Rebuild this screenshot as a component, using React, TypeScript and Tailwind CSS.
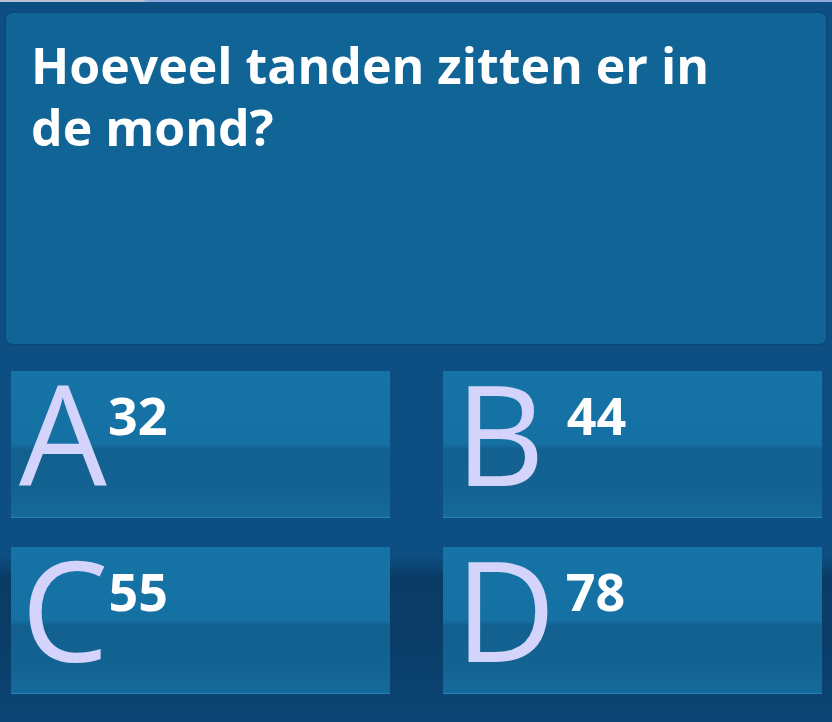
const options = [
  { letter: 'A', value: '32', letterPad: 'pl-[8px]', numPad: 'ml-[1px]' },
  { letter: 'B', value: '44', letterPad: 'pl-[12px]', numPad: 'ml-[22px]' },
  { letter: 'C', value: '55', letterPad: 'pl-[10px]', numPad: 'ml-[0px]' },
  { letter: 'D', value: '78', letterPad: 'pl-[12px]', numPad: 'ml-[10px]' },
];

function AnswerBox({ letter, value, letterPad, numPad }: (typeof options)[number]) {
  return (
    <div className="h-[147px] bg-[linear-gradient(to_bottom,#1673a5_0%,#1571a3_50%,#12608f_54%,#136493_85%,#156a9c_100%)] border-b border-[#2384b8]">
      <div className={`flex items-start ${letterPad}`}>
        <span className="text-[139px] leading-none font-normal text-[#d3d3fc] -mt-[8px]">{letter}</span>
        <span className={`text-[52px] leading-none font-bold text-white mt-[18px] ${numPad}`}>{value}</span>
      </div>
    </div>
  );
}

export default function App() {
  return (
    <div
      className="w-[832px] h-[722px] overflow-hidden flex flex-col bg-[linear-gradient(to_bottom,#0d4f82_0%,#0d4f82_77%,#0a3c66_80%,#0a3d68_88%,#0b4574_100%)]"
      style={{ fontFamily: '"Open Sans", "Noto Sans", sans-serif' }}
    >
      <div className="h-[2px] bg-[linear-gradient(to_right,#b9c3cf_0%,#b9c3cf_17%,#8fa7dd_18%,#8fa7dd_100%)]" />
      <div className="px-[6px] pt-[11px]">
        <div className="h-[331px] rounded-[6px] bg-[#106496] shadow-[0_0_2px_rgba(0,30,60,0.5)] pl-[25px] pt-[18px]">
          <p className="text-[50px] leading-[68px] font-bold text-white -mb-[6px]">Hoeveel tanden zitten er in</p>
          <p className="text-[50px] leading-[68px] font-bold text-white -mt-[3px]">de mond?</p>
        </div>
      </div>
      <div className="grid grid-cols-[379px_379px] gap-x-[53px] gap-y-[29px] pl-[11px] pt-[27px]">
        {options.map((o) => (
          <AnswerBox key={o.letter} {...o} />
        ))}
      </div>
    </div>
  );
}
